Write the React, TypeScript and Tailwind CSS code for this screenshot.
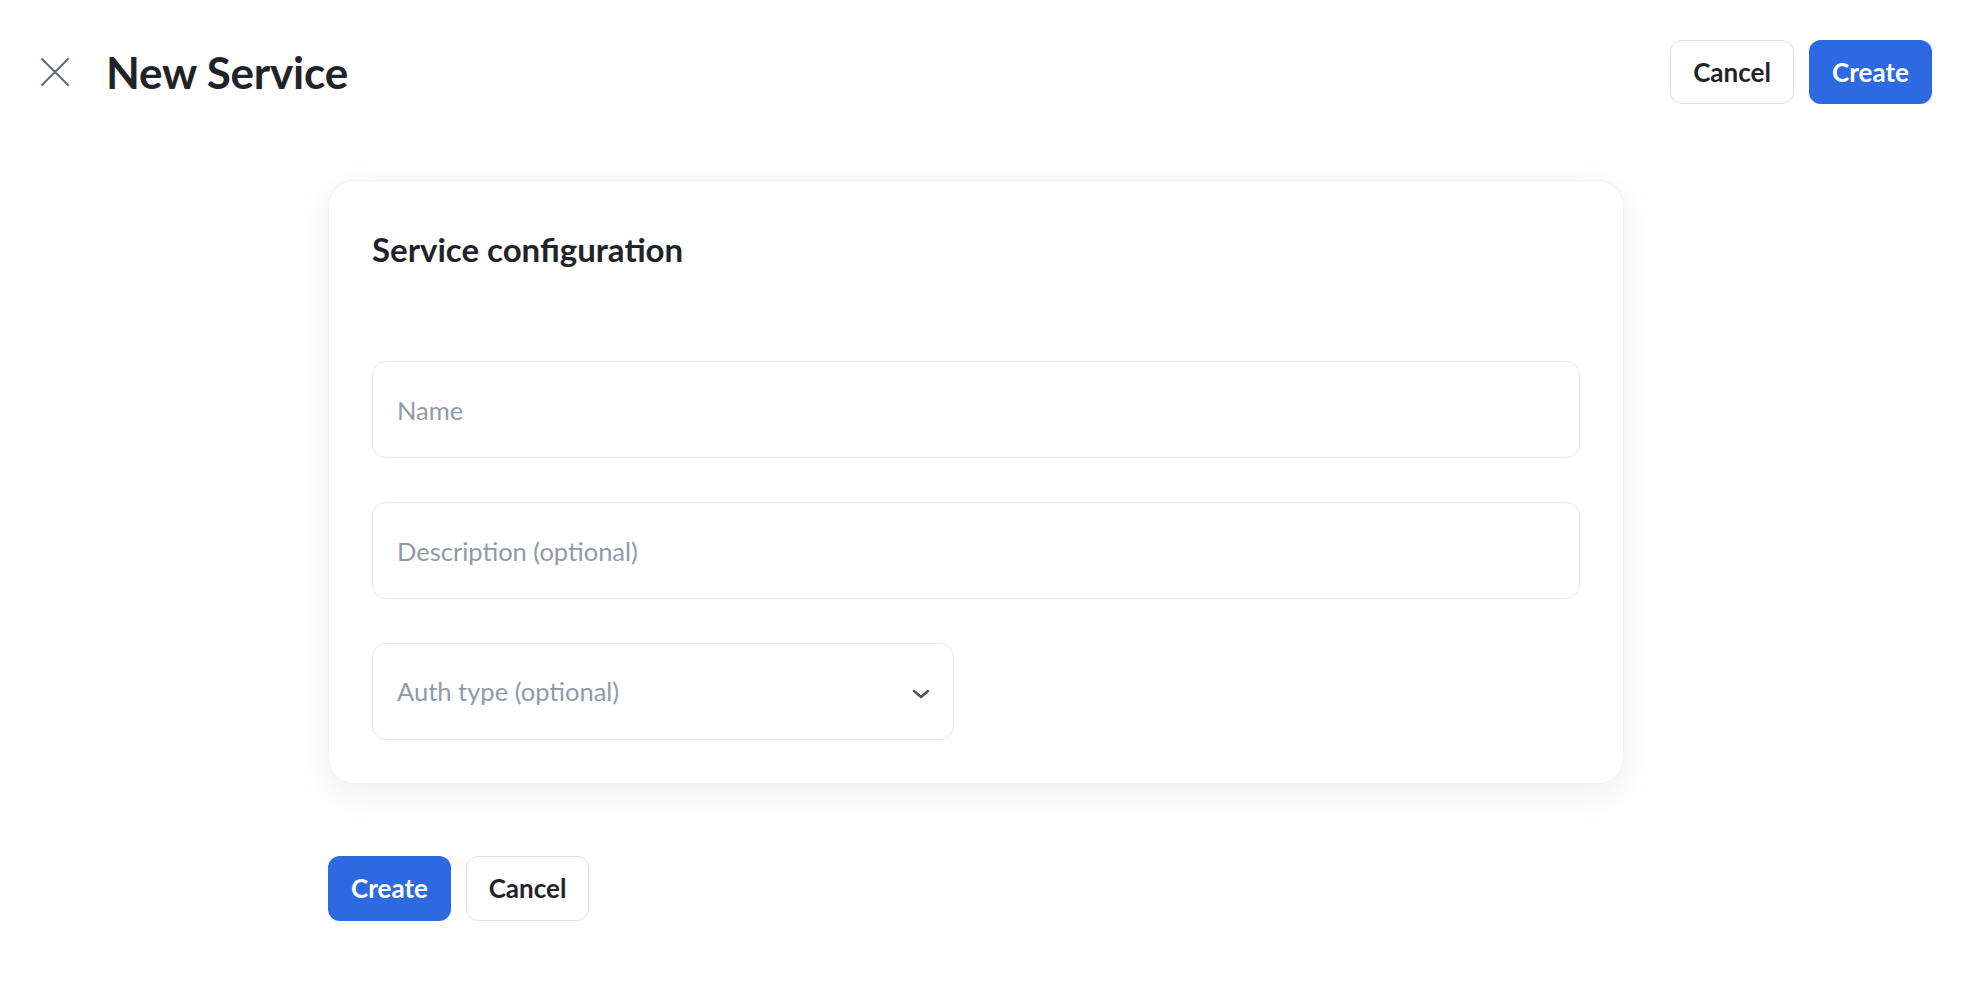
import { useState } from "react";

const font = { fontFamily: "Lato, 'Noto Sans', sans-serif" };

const CloseIcon = () => (
  <svg width="28" height="28" viewBox="0 0 28 28" fill="none" stroke="#5f6b78" strokeWidth="2" strokeLinecap="round">
    <path d="M1 1 27 27M27 1 1 27" />
  </svg>
);

const Chevron = () => (
  <svg width="18" height="10" viewBox="0 0 18 10" fill="none" stroke="#4b5563" strokeWidth="2.5" strokeLinecap="round" strokeLinejoin="round">
    <path d="M2 2l7 6 7-6" />
  </svg>
);

export default function App() {
  const [name, setName] = useState("");
  const [desc, setDesc] = useState("");

  return (
    <div style={font} className="min-h-[996px] w-full bg-white text-[#1f242b]">
      {/* header */}
      <div className="flex items-center justify-between pl-[41px] pr-[34px] pt-[40px]">
        <div className="flex items-center">
          <button className="flex h-[28px] w-[28px] items-center justify-center">
            <CloseIcon />
          </button>
          <h1 className="ml-[37px] text-[44px] font-bold leading-[64px] tracking-[-0.2px]">New Service</h1>
        </div>
        <div className="flex gap-[15px]">
          <button className="h-[64px] w-[124px] rounded-[12px] border border-[#dfe2e6] bg-white text-[26px] font-bold">
            Cancel
          </button>
          <button className="h-[64px] w-[123px] rounded-[12px] bg-[#2d69e1] text-[26px] font-bold text-white">
            Create
          </button>
        </div>
      </div>

      {/* main */}
      <div className="ml-[328px] w-[1296px] pt-[76px]">
        <div className="rounded-[26px] border border-[#f1f2f4] bg-white px-[43px] pb-[43px] pt-[46px] shadow-[0_10px_36px_rgba(20,30,50,0.07)]">
          <h2 className="text-[33px] font-bold leading-[44px]">Service configuration</h2>
          <div className="mt-[90px] flex flex-col gap-[44px]">
            <input
              value={name}
              onChange={(e) => setName(e.target.value)}
              placeholder="Name"
              style={font}
              className="h-[97px] w-full rounded-[14px] border border-[#e6e8eb] px-[24px] text-[25.5px] outline-none placeholder:text-[#8f9aa9]"
            />
            <input
              value={desc}
              onChange={(e) => setDesc(e.target.value)}
              placeholder="Description (optional)"
              style={font}
              className="h-[97px] w-full rounded-[14px] border border-[#e6e8eb] px-[24px] text-[25.5px] outline-none placeholder:text-[#8f9aa9]"
            />
            <div className="flex h-[97px] w-[582px] items-center justify-between rounded-[14px] border border-[#e6e8eb] pl-[24px] pr-[23px]">
              <span className="text-[25.5px] text-[#8f9aa9]">Auth type (optional)</span>
              <span className="mt-[4px]"><Chevron /></span>
            </div>
          </div>
        </div>

        <div className="mt-[72px] flex gap-[15px]">
          <button className="h-[65px] w-[123px] rounded-[12px] bg-[#2d69e1] text-[26px] font-bold text-white">
            Create
          </button>
          <button className="h-[65px] w-[123px] rounded-[12px] border border-[#dfe2e6] bg-white text-[26px] font-bold">
            Cancel
          </button>
        </div>
      </div>
    </div>
  );
}
